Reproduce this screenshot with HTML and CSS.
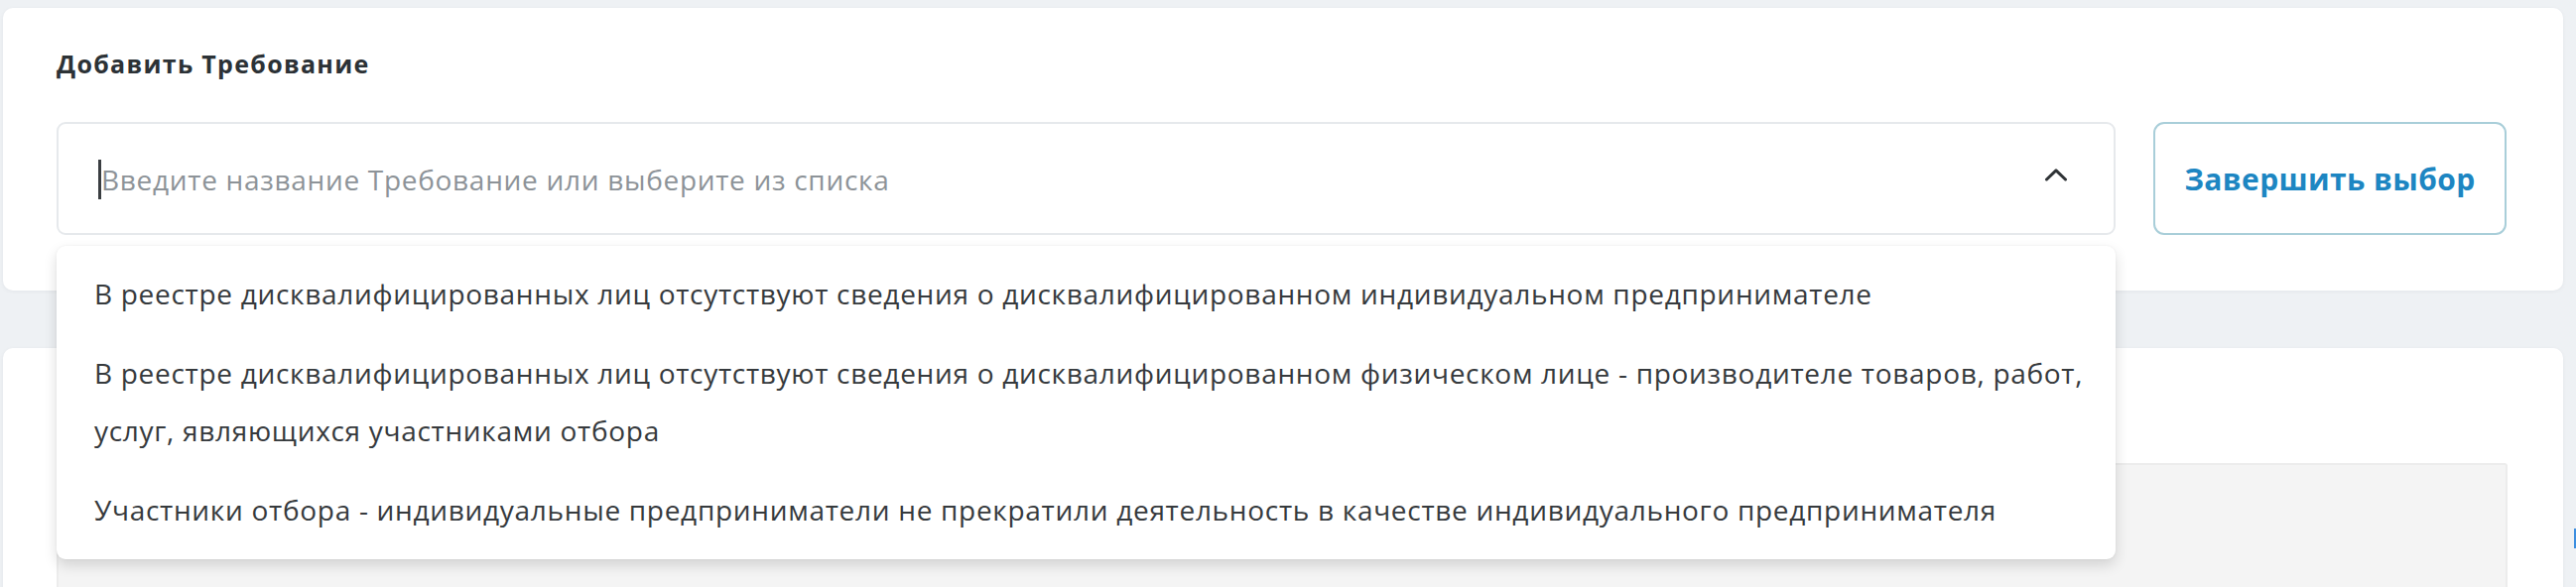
FILE: index.html
```html
<!DOCTYPE html>
<html lang="ru">
<head>
<meta charset="utf-8">
<title>Добавить Требование</title>
<link rel="stylesheet" href="styles.css">
</head>
<body>
<div class="page">
  <section class="card card-add">
    <h2 class="title">Добавить Требование</h2>
    <div class="row">
      <div class="select">
        <div class="select-field">
          <span class="caret"></span>
          <span class="placeholder">Введите название Требование или выберите из списка</span>
          <svg class="chevron" width="24" height="14" viewBox="0 0 24 14" aria-hidden="true">
            <path d="M2.5 12 L12 2.8 L21.5 12" fill="none" stroke="#2f3336" stroke-width="3" stroke-linecap="round" stroke-linejoin="round"/>
          </svg>
        </div>
        <ul class="dropdown">
          <li class="option">В реестре дисквалифицированных лиц отсутствуют сведения о дисквалифицированном индивидуальном предпринимателе</li>
          <li class="option">В реестре дисквалифицированных лиц отсутствуют сведения о дисквалифицированном физическом лице - производителе товаров, работ, услуг, являющихся участниками отбора</li>
          <li class="option">Участники отбора - индивидуальные предприниматели не прекратили деятельность в качестве индивидуального предпринимателя</li>
        </ul>
      </div>
      <button class="btn-finish" type="button">Завершить выбор</button>
    </div>
  </section>
  <section class="card card-list">
    <div class="list-box"></div>
  </section>
  <span class="edge-mark"></span>
</div>
</body>
</html>
```
FILE: styles.css
```css
html, body {
  margin: 0;
  padding: 0;
}
body {
  background: #eef1f4;
  font-family: "Open Sans", "Noto Sans", "DejaVu Sans", sans-serif;
  color: #33383b;
  overflow: hidden;
}
.page {
  position: relative;
  min-height: 592px;
  padding: 8px 13px 0 3px;
  box-sizing: border-box;
}
.card {
  background: #ffffff;
  border-radius: 10px;
  box-shadow: 0 1px 4px rgba(30, 45, 60, 0.05);
}
.card-add {
  position: relative;
  z-index: 2;
  padding: 41px 57px 56px 54px;
}
.title {
  margin: 0 0 44px;
  font-size: 25px;
  line-height: 30px;
  font-weight: 700;
  letter-spacing: 1.3px;
  color: #2c3236;
}
.row {
  display: flex;
  gap: 38px;
  height: 114px;
}
.select {
  position: relative;
  flex: 1;
}
.select-field {
  box-sizing: border-box;
  height: 114px;
  display: flex;
  align-items: center;
  padding: 0 46px 0 40px;
  border: 2px solid #e6e9ec;
  border-radius: 9px;
  background: #fff;
}
.caret {
  display: block;
  width: 3px;
  height: 40px;
  background: #3a3e41;
  margin-top: 2px;
  flex: none;
}
.placeholder {
  flex: 1;
  font-size: 28px;
  letter-spacing: 0.7px;
  color: #8d9398;
  white-space: nowrap;
  margin-top: 2px;
}
.chevron {
  flex: none;
  margin-top: -8px;
}
.dropdown {
  position: absolute;
  top: 125px;
  left: 0;
  right: 0;
  margin: 0;
  padding: 8px 0 10px;
  list-style: none;
  background: #ffffff;
  border-radius: 9px;
  box-shadow: 0 6px 14px rgba(0, 0, 0, 0.14), 0 0 3px rgba(0, 0, 0, 0.05);
  z-index: 5;
}
.option {
  padding: 11px 30px 11px 38px;
  font-size: 28px;
  letter-spacing: 0.7px;
  line-height: 58px;
  color: #363a3d;
}
.btn-finish {
  flex: none;
  width: 356px;
  height: 114px;
  box-sizing: border-box;
  border: 2px solid #a9ced9;
  border-radius: 11px;
  background: #ffffff;
  color: #1d86c2;
  font-family: "Open Sans", "Noto Sans", sans-serif;
  font-size: 30px;
  letter-spacing: 0.4px;
  font-weight: 700;
  padding: 0;
}
.card-list {
  margin-top: 58px;
  padding: 116px 56px 0 54px;
  height: 300px;
  box-sizing: border-box;
}
.list-box {
  height: 200px;
  background: #f4f4f4;
  border: 2px solid #ececec;
  border-radius: 3px;
}
.edge-mark {
  position: absolute;
  right: 0;
  top: 533px;
  width: 2px;
  height: 20px;
  background: #3d8fe0;
}
```
